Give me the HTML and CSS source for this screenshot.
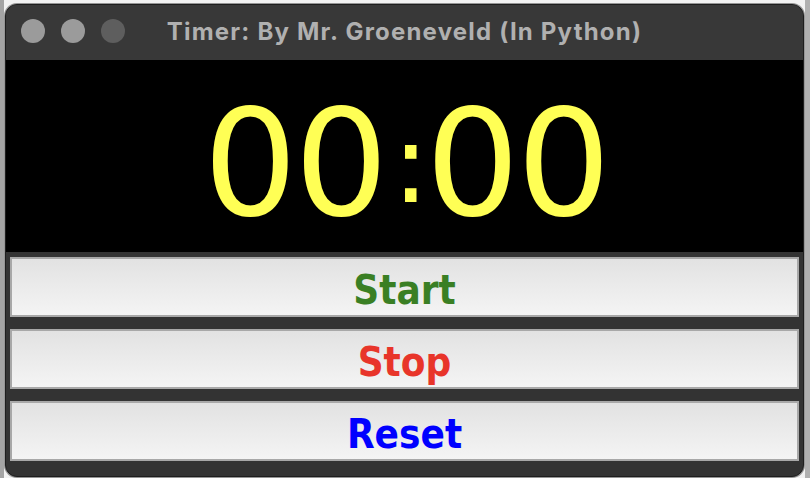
FILE: index.html
```html
<!DOCTYPE html>
<html>
<head>
<meta charset="utf-8">
<link rel="stylesheet" href="styles.css">
</head>
<body>
<div class="window">
  <div class="titlebar">
    <div class="lights">
      <span class="light"></span>
      <span class="light"></span>
      <span class="light dim"></span>
    </div>
    <div class="title">Timer: By Mr. Groeneveld (In Python)</div>
    <div></div>
  </div>
  <div class="display">
    <span class="digits">00</span><span class="colon">:</span><span class="digits">00</span>
  </div>
  <div class="buttons">
    <button class="btn start">Start</button>
    <button class="btn stop">Stop</button>
    <button class="btn reset">Reset</button>
  </div>
</div>
</body>
</html>
```
FILE: styles.css
```css
html, body {
  margin: 0;
  padding: 0;
}
body {
  width: 810px;
  height: 478px;
  overflow: hidden;
  background: linear-gradient(to right, #a4a4a4 0, #a4a4a4 4px, #f2f2f2 4px, #f2f2f2 805px, #b0b0b0 805px);
  padding-top: 4px;
  padding-left: 5px;
  box-sizing: border-box;
}
.window {
  width: 799px;
  height: 473px;
  box-sizing: border-box;
  border: 1px solid #1e1e1e;
  border-radius: 12px;
  box-shadow: 0 0 0 1px rgba(110,110,110,0.7);
  background: #333333;
  overflow: hidden;
  display: flex;
  flex-direction: column;
}
.titlebar {
  height: 55px;
  flex: none;
  box-sizing: border-box;
  padding-bottom: 3px;
  background: #383838;
  display: grid;
  grid-template-columns: 1fr auto 1fr;
  align-items: center;
}
.lights {
  display: flex;
  gap: 16px;
  padding-left: 15px;
}
.light {
  width: 24px;
  height: 24px;
  border-radius: 50%;
  background: #9b9b9b;
}
.light.dim {
  background: #5e5e5e;
}
.title {
  font-family: Inter, "Liberation Sans", sans-serif;
  font-weight: 700;
  font-size: 24px;
  color: #b0b0b0;
  white-space: nowrap;
  letter-spacing: 1.2px;
}
.display {
  height: 192px;
  flex: none;
  box-sizing: border-box;
  padding-top: 16px;
  padding-left: 2px;
  background: #000;
  display: flex;
  align-items: center;
  justify-content: center;
  font-family: "DejaVu Sans", sans-serif;
  font-size: 148px;
  color: #ffff55;
  line-height: 1;
}
.digits {
  letter-spacing: -3px;
}
.colon {
  display: inline-block;
  width: 32px;
  text-align: center;
  margin: 0 6px 0 2px;
  transform: scale(0.75);
}
.buttons {
  flex: 1;
  display: flex;
  flex-direction: column;
  gap: 12px;
  padding: 5px 4px 0 4px;
}
.btn {
  height: 60px;
  box-sizing: border-box;
  border: 2px solid #a8a8a8;
  background: linear-gradient(to bottom, #e2e2e2, #f4f4f4);
  font-family: "DejaVu Sans Condensed", "DejaVu Sans", sans-serif;
  font-weight: 700;
  font-size: 40px;
  padding: 5px 0 0 0;
  margin: 0;
  line-height: 1;
}
.start { color: #3a7f24; }
.stop { color: #e8352a; }
.reset { color: #0000ff; }
```
